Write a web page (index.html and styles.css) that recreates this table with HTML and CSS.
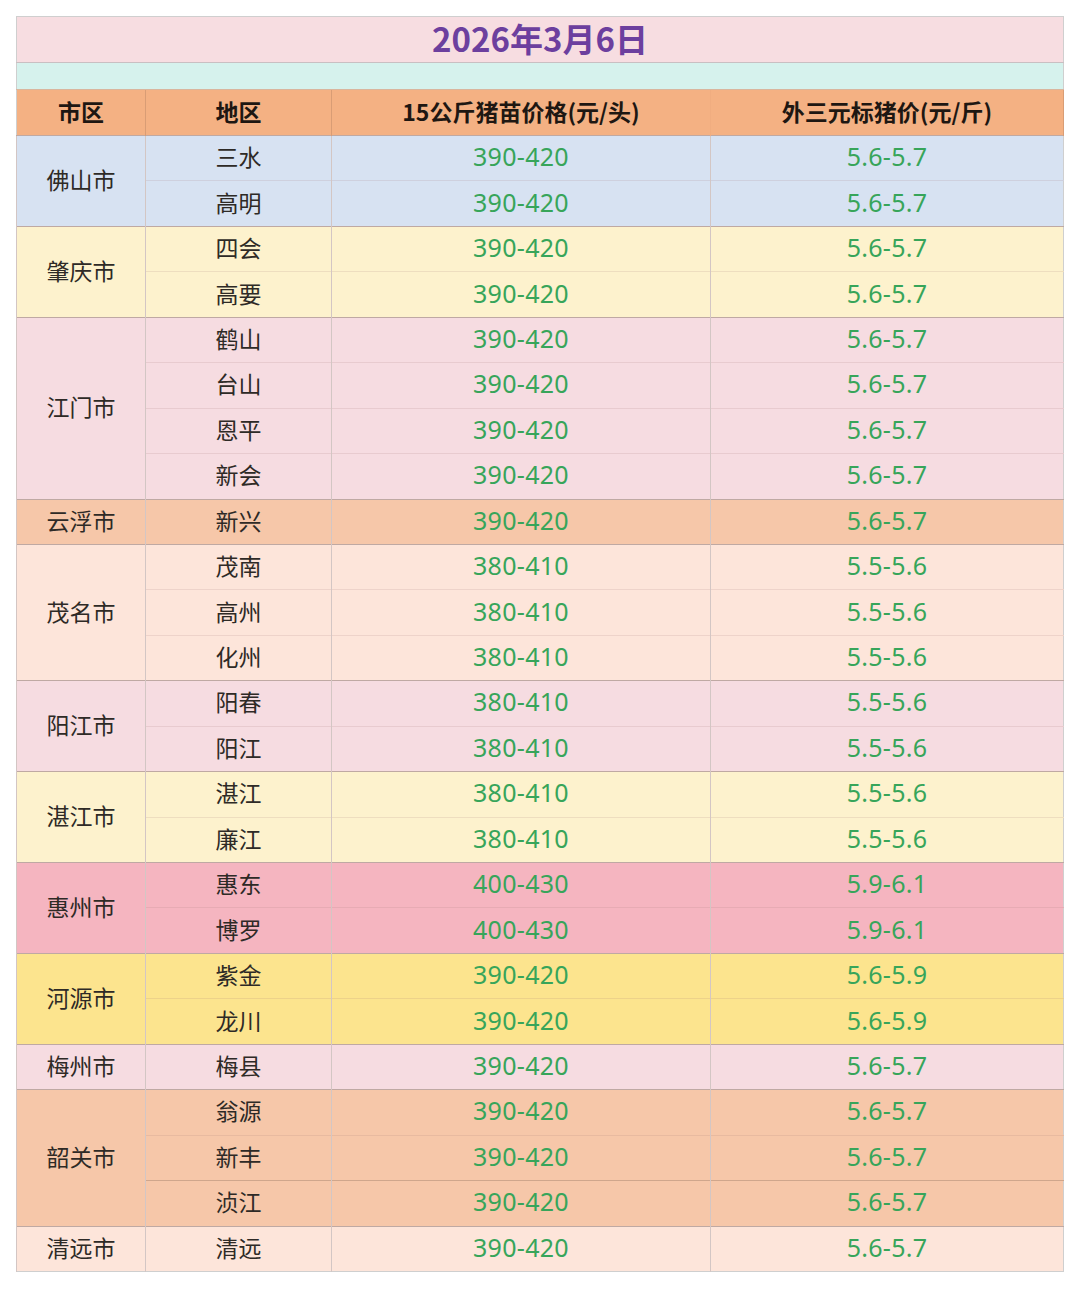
FILE: index.html
```html
<!DOCTYPE html>
<html lang="zh-CN">
<head>
<meta charset="utf-8">
<title>2026年3月6日 猪价</title>
<link rel="stylesheet" href="styles.css">
</head>
<body>
<table class="price">
  <colgroup>
    <col class="c1"><col class="c2"><col class="c3"><col class="c4">
  </colgroup>
  <tr class="title"><td colspan="4">2026年3月6日</td></tr>
  <tr class="spacer"><td colspan="4"></td></tr>
  <tr class="head"><th>市区</th><th>地区</th><th>15公斤猪苗价格(元/头)</th><th>外三元标猪价(元/斤)</th></tr>

  <tr class="g blue"><td class="city" rowspan="2">佛山市</td><td>三水</td><td class="n">390-420</td><td class="n">5.6-5.7</td></tr>
  <tr class="blue sub"><td>高明</td><td class="n">390-420</td><td class="n">5.6-5.7</td></tr>

  <tr class="g cream"><td class="city" rowspan="2">肇庆市</td><td>四会</td><td class="n">390-420</td><td class="n">5.6-5.7</td></tr>
  <tr class="cream sub"><td>高要</td><td class="n">390-420</td><td class="n">5.6-5.7</td></tr>

  <tr class="g pink"><td class="city" rowspan="4">江门市</td><td>鹤山</td><td class="n">390-420</td><td class="n">5.6-5.7</td></tr>
  <tr class="pink sub"><td>台山</td><td class="n">390-420</td><td class="n">5.6-5.7</td></tr>
  <tr class="pink sub"><td>恩平</td><td class="n">390-420</td><td class="n">5.6-5.7</td></tr>
  <tr class="pink sub"><td>新会</td><td class="n">390-420</td><td class="n">5.6-5.7</td></tr>

  <tr class="g orange"><td class="city">云浮市</td><td>新兴</td><td class="n">390-420</td><td class="n">5.6-5.7</td></tr>

  <tr class="g peach"><td class="city" rowspan="3">茂名市</td><td>茂南</td><td class="n">380-410</td><td class="n">5.5-5.6</td></tr>
  <tr class="peach sub"><td>高州</td><td class="n">380-410</td><td class="n">5.5-5.6</td></tr>
  <tr class="peach sub"><td>化州</td><td class="n">380-410</td><td class="n">5.5-5.6</td></tr>

  <tr class="g pink"><td class="city" rowspan="2">阳江市</td><td>阳春</td><td class="n">380-410</td><td class="n">5.5-5.6</td></tr>
  <tr class="pink sub"><td>阳江</td><td class="n">380-410</td><td class="n">5.5-5.6</td></tr>

  <tr class="g cream"><td class="city" rowspan="2">湛江市</td><td>湛江</td><td class="n">380-410</td><td class="n">5.5-5.6</td></tr>
  <tr class="cream sub"><td>廉江</td><td class="n">380-410</td><td class="n">5.5-5.6</td></tr>

  <tr class="g rose"><td class="city" rowspan="2">惠州市</td><td>惠东</td><td class="n">400-430</td><td class="n">5.9-6.1</td></tr>
  <tr class="rose sub"><td>博罗</td><td class="n">400-430</td><td class="n">5.9-6.1</td></tr>

  <tr class="g yellow"><td class="city" rowspan="2">河源市</td><td>紫金</td><td class="n">390-420</td><td class="n">5.6-5.9</td></tr>
  <tr class="yellow sub"><td>龙川</td><td class="n">390-420</td><td class="n">5.6-5.9</td></tr>

  <tr class="g pink"><td class="city">梅州市</td><td>梅县</td><td class="n">390-420</td><td class="n">5.6-5.7</td></tr>

  <tr class="g orange"><td class="city" rowspan="3">韶关市</td><td>翁源</td><td class="n">390-420</td><td class="n">5.6-5.7</td></tr>
  <tr class="orange sub"><td>新丰</td><td class="n">390-420</td><td class="n">5.6-5.7</td></tr>
  <tr class="orange sub strong"><td>浈江</td><td class="n">390-420</td><td class="n">5.6-5.7</td></tr>

  <tr class="g peach last"><td class="city">清远市</td><td>清远</td><td class="n">390-420</td><td class="n">5.6-5.7</td></tr>
</table>
</body>
</html>
```

FILE: styles.css
```css
html, body {
  margin: 0;
  padding: 0;
  background: #ffffff;
}

body {
  padding: 16px 0 0 16px;
  font-family: "Noto Sans CJK SC", "Noto Sans", sans-serif;
}

.price {
  border-collapse: collapse;
  width: 1047px;
  table-layout: fixed;
  border: 1px solid #cfcfcf;
}

.c1 { width: 129px; }
.c2 { width: 186px; }
.c3 { width: 379px; }
.c4 { width: 353px; }

.price td,
.price th {
  padding: 0 0 3px 0;
  text-align: center;
  vertical-align: middle;
  font-size: 23px;
  line-height: 1;
  color: #2e2a26;
}

.title td {
  height: 42px;
  background: #f7dde1;
  color: #6c3f9e;
  font-size: 33px;
  font-weight: 700;
  border-bottom: 1px solid #c9bfc2;
}

.spacer td {
  height: 23px;
  background: #d6f2ed;
  border-bottom: 1px solid #d9b69e;
}

.head th {
  height: 42px;
  background: #f4b183;
  font-weight: 700;
  color: #1e1712;
  border-right: 1px solid #d99d75;
}

.head th:nth-child(3) {
  border-right-color: #f0ad80;
}

.price tr:not(.title):not(.spacer):not(.head) td {
  height: 41.45px;
  border-left: 1px solid #d3c6c4;
}

.price tr td.n {
  font-size: 25px;
  color: #37a55a;
  font-family: "Noto Sans", "Open Sans", sans-serif;
  letter-spacing: 0.3px;
}

.price tr td.n + td.n {
  border-left-color: rgba(0, 0, 0, 0.025);
}

.g td {
  border-top: 1px solid #bfa9a3;
}

.sub td {
  border-top: 1px solid rgba(160, 120, 120, 0.16);
}

.sub.strong td {
  border-top: 1px solid #cfa68c;
}

.blue td { background: #d7e2f2; }
.blue td.n { color: #35a679; }
.cream td { background: #fdf2cd; }
.pink td { background: #f6dce1; }
.orange td { background: #f6c7a9; }
.peach td { background: #fde5da; }
.rose td { background: #f5b5c0; }
.rose td.n { color: #3b8d64; }
.yellow td { background: #fce48e; }
.yellow td.n { color: #37a347; }
```
